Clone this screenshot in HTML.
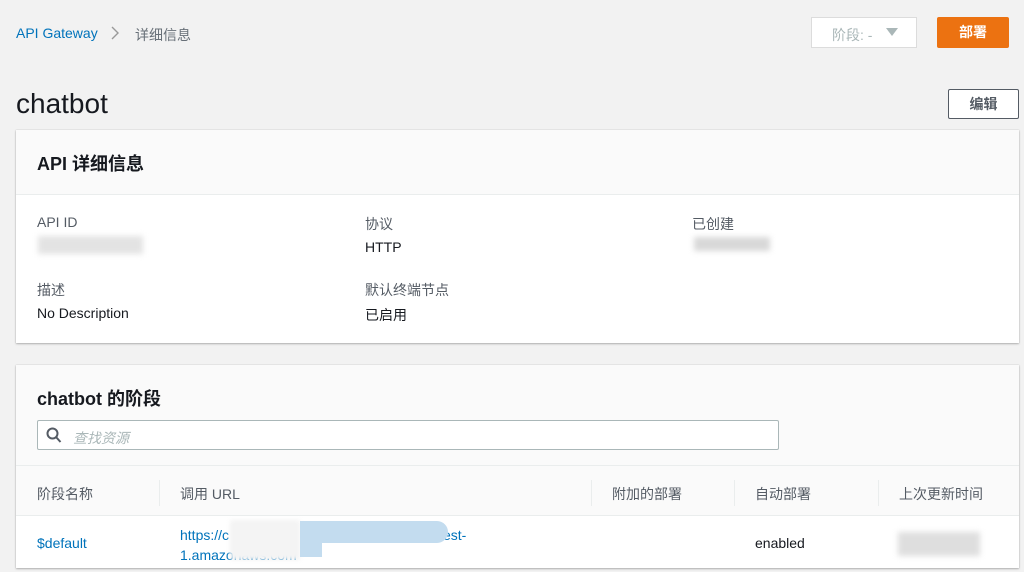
<!DOCTYPE html>
<html><head><meta charset="utf-8"><style>
*{box-sizing:border-box;margin:0;padding:0}
body{width:1024px;height:572px;overflow:hidden;background:#f2f2f2;font-family:"Liberation Sans","Noto Sans CJK SC",sans-serif;color:#16191f;position:relative}
.a{position:absolute;white-space:nowrap}
.panel{position:absolute;left:16px;width:1003px;background:#fff;box-shadow:0 1px 2px rgba(0,0,0,.25),0 0 1px rgba(0,0,0,.2)}
.lbl{font-size:14px;color:#545b64}
.val{font-size:14px;color:#16191f}
.blur{position:absolute;background:#e3e3e3;filter:blur(3px)}
</style></head><body>
<div class="a" style="left:16px;top:25px;font-size:14px;color:#0073bb">API Gateway</div>
<svg class="a" style="left:110px;top:26px" width="10" height="14"><path d="M2 1l6 6-6 6" stroke="#999" stroke-width="1.4" fill="none"/></svg>
<div class="a" style="left:135px;top:25px;font-size:14px;color:#687078">详细信息</div>
<div class="a" style="left:811px;top:17px;width:106px;height:31px;background:#fff;border:1px solid #dcdcdc;font-size:14px;color:#aab7b8;padding:7px 0 0 20px">阶段: -</div>
<svg class="a" style="left:886px;top:28px" width="12" height="9"><path d="M0 0h12L6 8z" fill="#aab7b8"/></svg>
<div class="a" style="left:937px;top:17px;width:72px;height:31px;background:#ec7211;border-radius:2px;color:#fff;font-weight:bold;font-size:14px;text-align:center;line-height:31px">部署</div>
<div class="a" style="left:16px;top:88px;font-size:28px;color:#16191f">chatbot</div>
<div class="a" style="left:948px;top:89px;width:71px;height:30px;background:#fff;border:1px solid #545b64;border-radius:2px;font-weight:bold;font-size:14px;color:#545b64;text-align:center;line-height:28px">编辑</div>

<div class="panel" style="top:130px;height:213px">
 <div style="height:65px;background:#fafafa;border-bottom:1px solid #eaeded"></div>
</div>
<div class="a" style="left:37px;top:150px;font-size:18px;font-weight:bold">API 详细信息</div>
<div class="a lbl" style="left:37px;top:214px">API ID</div>
<div class="blur" style="left:38px;top:236px;width:105px;height:18px"></div>
<div class="a lbl" style="left:365px;top:214px">协议</div>
<div class="a val" style="left:365px;top:239px">HTTP</div>
<div class="a lbl" style="left:692px;top:214px">已创建</div>
<div class="blur" style="left:694px;top:237px;width:76px;height:14px;background:#d8d8d8"></div>
<div class="a lbl" style="left:37px;top:280px">描述</div>
<div class="a val" style="left:37px;top:305px">No Description</div>
<div class="a lbl" style="left:365px;top:280px">默认终端节点</div>
<div class="a val" style="left:365px;top:305px">已启用</div>

<div class="panel" style="top:365px;height:203px">
 <div style="height:101px;background:#fafafa;border-bottom:1px solid #eaeded"></div>
 <div style="height:50px;background:#fafafa;border-bottom:1px solid #eaeded"></div>
</div>
<div class="a" style="left:37px;top:385px;font-size:18px;font-weight:bold">chatbot 的阶段</div>
<div class="a" style="left:37px;top:420px;width:742px;height:30px;background:#fff;border:1px solid #aab7b8;border-radius:2px"></div>
<svg class="a" style="left:46px;top:427px" width="16" height="17"><circle cx="6.5" cy="6.5" r="5" stroke="#545b64" stroke-width="2" fill="none"/><path d="M10 10l4.5 5" stroke="#545b64" stroke-width="2"/></svg>
<div class="a" style="left:73px;top:428px;font-size:14px;color:#aab7b8;font-style:italic">查找资源</div>
<div class="a lbl" style="left:37px;top:484px;color:#545b64">阶段名称</div>
<div class="a" style="left:159px;top:480px;width:1px;height:26px;background:#eaeded"></div>
<div class="a lbl" style="left:180px;top:484px">调用 URL</div>
<div class="a" style="left:591px;top:480px;width:1px;height:26px;background:#eaeded"></div>
<div class="a lbl" style="left:612px;top:484px">附加的部署</div>
<div class="a" style="left:734px;top:480px;width:1px;height:26px;background:#eaeded"></div>
<div class="a lbl" style="left:755px;top:484px">自动部署</div>
<div class="a" style="left:878px;top:480px;width:1px;height:26px;background:#eaeded"></div>
<div class="a lbl" style="left:899px;top:484px">上次更新时间</div>
<div class="a" style="left:37px;top:535px;font-size:14px;color:#0073bb">$default</div>
<div class="a" style="left:180px;top:525px;font-size:14px;color:#0073bb;line-height:20px">https://c</div>
<div class="a" style="left:436px;top:525px;font-size:14px;color:#0073bb;line-height:20px">vest-</div>
<div class="a" style="left:180px;top:545px;font-size:14px;color:#0073bb;line-height:20px">1.amazonaws.com</div>
<div class="a" style="left:230px;top:520px;width:70px;height:40px;background:#f4f4f4;filter:blur(2px)"></div>
<div class="a" style="left:300px;top:521px;width:148px;height:22px;background:#c3dcef;border-radius:0 12px 12px 0"></div>
<div class="a" style="left:300px;top:543px;width:22px;height:14px;background:#c3dcef"></div>
<div class="a val" style="left:755px;top:535px">enabled</div>
<div class="blur" style="left:898px;top:532px;width:82px;height:24px;background:#dedede"></div>
</body></html>
